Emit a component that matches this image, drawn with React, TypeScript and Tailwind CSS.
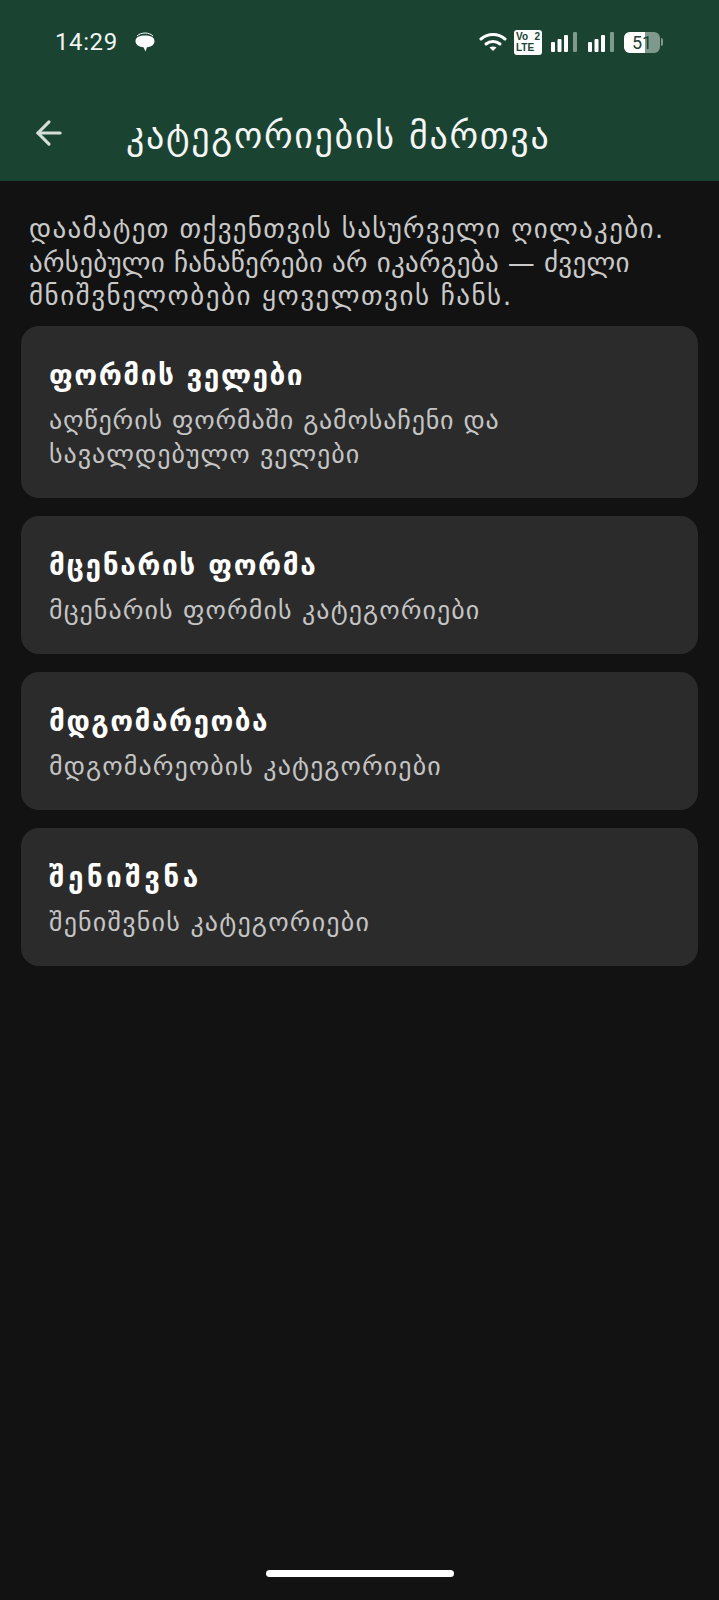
import React from 'react';
import { ArrowLeft } from 'lucide-react';

const cards = [
  {
    title: 'ფორმის ველები',
    titleTrack: 'tracking-[1.5px]',
    lines: [
      { text: 'აღწერის ფორმაში გამოსაჩენი და', track: 'tracking-[0.830px]' },
      { text: 'სავალდებულო ველები', track: 'tracking-[1px]' },
    ],
  },
  {
    title: 'მცენარის ფორმა',
    titleTrack: 'tracking-[1.6px]',
    lines: [{ text: 'მცენარის ფორმის კატეგორიები', track: 'tracking-[1.07px]' }],
  },
  {
    title: 'მდგომარეობა',
    titleTrack: 'tracking-[1.5px]',
    lines: [{ text: 'მდგომარეობის კატეგორიები', track: 'tracking-[1.08px]' }],
  },
  {
    title: 'შენიშვნა',
    titleTrack: 'tracking-[3.4px]',
    lines: [{ text: 'შენიშვნის კატეგორიები', track: 'tracking-[1.2px]' }],
  },
];

const Signal = () => (
  <svg width="28" height="22" viewBox="0 0 28 22" fill="#fff">
    <rect x="1" y="11" width="4" height="10" rx="1" />
    <rect x="7.500" y="8" width="4" height="13" rx="1" />
    <rect x="14" y="4" width="4" height="17" rx="1" />
    <rect x="23" y="1" width="4" height="20" rx="1" fill="#7f9a8d" />
  </svg>
);

const StatusBar = () => (
  <div className="h-[101px] flex items-start justify-between pl-[55px] pr-[56px] pt-[26px]">
    <div className="flex items-center h-[32px]">
      <span className="text-[24px] tracking-[0.6px] text-[#f1f5f2] font-['Roboto',sans-serif]">14:29</span>
      <svg className="ml-[16px]" width="22" height="22" viewBox="0 0 22 22" fill="#fff">
        <path d="M11 4.500c5.300 0 9.500 1.600 9.500 5.700 0 3.300-3.300 5.700-7.500 6L11.500 20.500 9.500 16.200C5 15.900 1.500 13.500 1.500 10.200c0-4.100 4.200-5.700 9.500-5.700z" />
        <path d="M3 5c2-2 5-3 8-3s6 1 8 3" fill="none" stroke="#fff" strokeWidth="1" />
      </svg>
    </div>
    <div className="flex items-center h-[32px]">
      <svg width="28" height="22" viewBox="0 0 28 22" fill="none" stroke="#fff" strokeWidth="3" strokeLinecap="round">
        <path d="M2 8c7-6 17-6 24 0" />
        <path d="M7 13c4-3.500 10-3.500 14 0" />
        <path d="M14 20l-3.500-3.500c2-1.500 5-1.500 7 0z" fill="#fff" strokeWidth="0" />
      </svg>
      <div className="ml-[7px] w-[28px] h-[25px] bg-white rounded-[3px] text-[#1b4332] text-[10px] leading-[11px] font-bold px-[2px] py-[1px] font-['Liberation_Sans',sans-serif]">
        <div className="flex justify-between"><span>Vo</span><span>2</span></div>
        <div>LTE</div>
      </div>
      <div className="ml-[8px]"><Signal /></div>
      <div className="ml-[9px]"><Signal /></div>
      <div className="ml-[9px] relative w-[36px] h-[21px] bg-[#7f9a8d] rounded-[6px] overflow-hidden">
        <div className="w-[21px] h-full bg-white" />
        <span className="absolute inset-0 flex items-center justify-center text-[#1b4332] text-[18px] font-['Roboto',sans-serif]">51</span>
      </div>
      <div className="ml-[1px] w-[2px] h-[8px] rounded-r-sm bg-[#7f9a8d]" />
    </div>
  </div>
);

export default function App() {
  return (
    <div className="w-[719px] h-[1600px] bg-[#121212] flex flex-col font-['DejaVu_Sans',sans-serif]">
      <div className="h-[181px] bg-[#1b4332] flex flex-col">
        <StatusBar />
        <div className="flex items-center h-[70px] pl-[30px]">
          <ArrowLeft size={38} color="#d5ddd8" strokeWidth={2} className="-mt-[6px]" />
          <h1 className="ml-[58px] text-[36px] tracking-[1.7px] text-[#f4f6f5] font-normal whitespace-nowrap">კატეგორიების მართვა</h1>
        </div>
      </div>
      <div className="px-[29px] pt-[31px] text-[27px] leading-[33.500px] text-[#c9c9c9] whitespace-nowrap">
        <p className="tracking-[1.3px]">დაამატეთ თქვენთვის სასურველი ღილაკები.</p>
        <p className="tracking-[0.280px]">არსებული ჩანაწერები არ იკარგება — ძველი</p>
        <p className="tracking-[1.5px]">მნიშვნელობები ყოველთვის ჩანს.</p>
      </div>
      <div className="flex flex-col gap-[18px] px-[21px] mt-[13px]">
        {cards.map((card) => (
          <div key={card.title} className="bg-[#2b2b2b] rounded-[18px] px-[28px] pt-[30px] pb-[27px]">
            <h2 className={`text-[28px] leading-[40px] font-bold text-white ${card.titleTrack}`}>{card.title}</h2>
            <div className="text-[26px] leading-[34px] text-[#c4c4c4] mt-[7px] whitespace-nowrap">
              {card.lines.map((line) => (
                <p key={line.text} className={line.track}>{line.text}</p>
              ))}
            </div>
          </div>
        ))}
      </div>
      <div className="mt-auto mb-[23px] mx-auto w-[188px] h-[7px] rounded-full bg-white" />
    </div>
  );
}
